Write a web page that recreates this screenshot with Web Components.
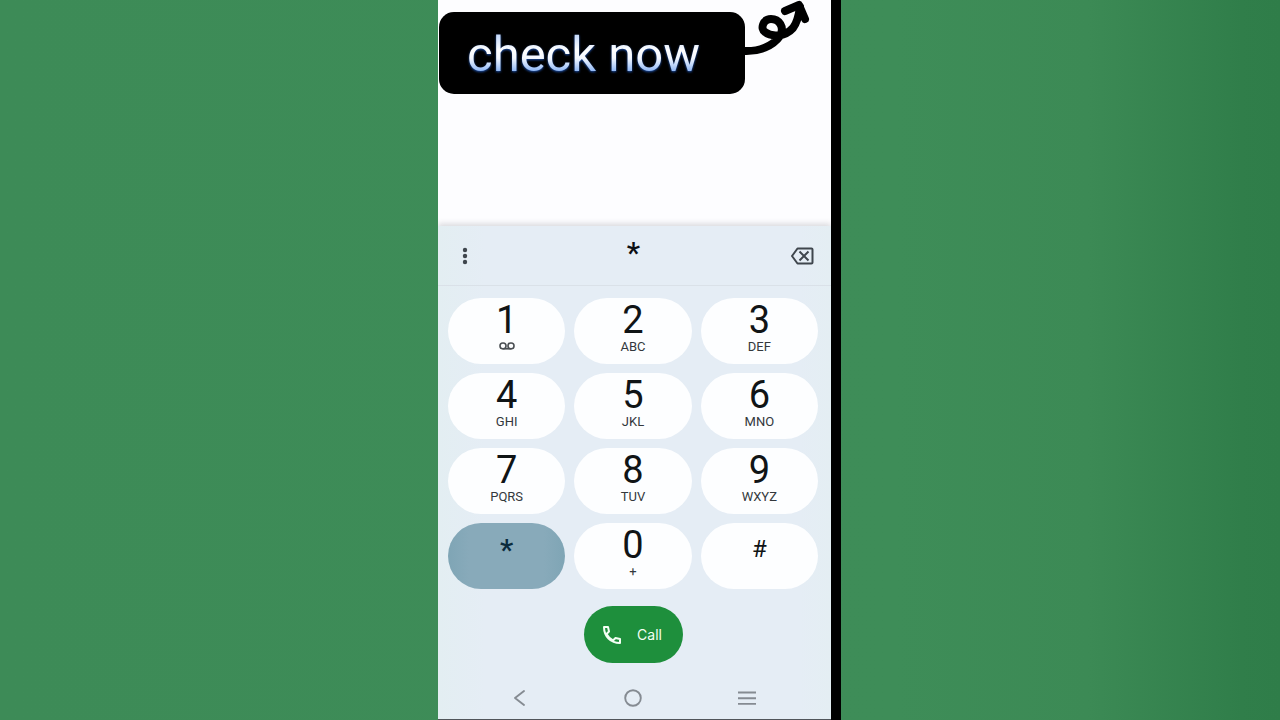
<!DOCTYPE html>
<html lang="en">
<head>
  <meta charset="UTF-8">
  <meta name="viewport" content="width=device-width, initial-scale=1.0">
  <title>Phone dialer</title>
  <style>
    body {
      margin: 0;
      font-family: Roboto, "Liberation Sans", sans-serif;
      color: #101416;
    }
  </style>
</head>
<body>
  <phone-stage>
    <promo-banner slot="top">check now</promo-banner>
    <dial-display value="*"></dial-display>
    <dial-pad></dial-pad>
    <call-button>Call</call-button>
    <system-nav></system-nav>
  </phone-stage>

  <script>
    // Green backdrop with the phone screen in the middle
    class PhoneStage extends HTMLElement {
      constructor() {
        super();
        this.attachShadow({ mode: 'open' });
      }

      connectedCallback() {
        this.shadowRoot.innerHTML = `
          <style>
            :host {
              display: grid;
              grid-template-columns: minmax(0, 438fr) minmax(0, 403fr) minmax(0, 439fr);
              min-height: 100vh;
              background: linear-gradient(to right, #3d8b57 0%, #3e8d58 70%, #3c8a55 85%, #307e4a 97%, #2f7d49 100%);
            }

            main {
              grid-column: 2;
              display: flex;
              flex-direction: column;
              border-right: 10px solid #000;
              background: #fdfdff;
            }

            .log {
              flex: 1;
            }

            .panel {
              display: flex;
              flex-direction: column;
              background: linear-gradient(to right, #e3eef2, #e5edf5 12%, #e5edf5 92%, #e4eef3);
              box-shadow: 0 -2px 6px rgba(60, 60, 70, 0.2);
              clip-path: inset(-12px 0 0 0);
              border-bottom: 1px solid #50555a;
            }
          </style>
          <main>
            <div class="log"><slot name="top"></slot></div>
            <section class="panel"><slot></slot></section>
          </main>
        `;
      }
    }

    // Black label with a curly arrow coming out of its right side
    class PromoBanner extends HTMLElement {
      constructor() {
        super();
        this.attachShadow({ mode: 'open' });
      }

      connectedCallback() {
        this.shadowRoot.innerHTML = `
          <style>
            :host {
              display: flex;
              align-items: flex-start;
              padding-left: 1px;
            }

            .label {
              margin-top: 12px;
              padding: 4px 45px 0 28px;
              border-radius: 15px;
              background: #000;
              font: 400 49px/78px Roboto, sans-serif;
              white-space: nowrap;
            }

            .label span {
              display: block;
              background: linear-gradient(#c9dcfb 26%, #fff 44%, #f4f8ff 54%, #8fb7f5 71%, #6f9ff0 80%);
              background-clip: text;
              -webkit-background-clip: text;
              color: transparent;
              filter: drop-shadow(0 1px 1px #1d4fa8);
            }

            svg {
              flex: none;
              margin-left: -2px;
            }
          </style>
          <div class="label"><span><slot></slot></span></div>
          <svg width="70" height="60" viewBox="0 0 70 60" fill="none" stroke="#000" stroke-width="8" stroke-linecap="round" stroke-linejoin="round" aria-hidden="true">
            <path d="M0 51C16 52 30 46 37 36C42 27 36 19 28 19C20 19 17 29 22 32C28 37 42 37 50 28C54 23 56 14 57 7"/>
            <path d="M42 11L56 5L62 19"/>
          </svg>
        `;
      }
    }

    // Row with the typed number between the menu and backspace buttons
    class DialDisplay extends HTMLElement {
      constructor() {
        super();
        this.attachShadow({ mode: 'open' });
      }

      connectedCallback() {
        this.shadowRoot.innerHTML = `
          <style>
            :host {
              display: flex;
              align-items: center;
              height: 59px;
              padding: 0 17px 0 15px;
              border-bottom: 1px solid #dae1e8;
            }

            button {
              display: flex;
              flex: none;
              padding: 0;
              border: 0;
              background: none;
              color: #3f464d;
              cursor: pointer;
            }

            input {
              flex: 1;
              min-width: 0;
              height: 44px;
              padding: 0 0 6px;
              box-sizing: border-box;
              border: 0;
              outline: 0;
              background: none;
              color: #0c0f14;
              font: 500 30px/36px Roboto, sans-serif;
              text-align: center;
            }
          </style>
          <button type="button" aria-label="More options">
            <svg width="24" height="24" viewBox="0 0 24 24" fill="currentColor">
              <circle cx="12" cy="6" r="2.2"/>
              <circle cx="12" cy="12" r="2.2"/>
              <circle cx="12" cy="18" r="2.2"/>
            </svg>
          </button>
          <input type="tel" aria-label="Phone number">
          <button type="button" aria-label="Backspace" id="erase">
            <svg width="24" height="24" viewBox="0 0 24 24" fill="none" stroke="currentColor" stroke-width="2" stroke-linejoin="round">
              <path d="M7.5 4.5H21.5Q22.5 4.5 22.5 5.5V18.5Q22.5 19.5 21.5 19.5H7.5L2 12Z"/>
              <path d="M9.5 7.5L18.5 16.5M18.5 7.5L9.5 16.5"/>
            </svg>
          </button>
        `;
        this.input = this.shadowRoot.querySelector('input');
        this.input.value = this.getAttribute('value') || '';
        this.shadowRoot.getElementById('erase').addEventListener('click', () => {
          this.input.value = this.input.value.slice(0, -1);
        });
      }

      append(text) {
        this.input.value += text;
      }
    }

    // One pill-shaped key
    class DialKey extends HTMLElement {
      constructor() {
        super();
        this.attachShadow({ mode: 'open' });
      }

      connectedCallback() {
        const digit = this.getAttribute('digit');
        const kind = { '*': 'star', '#': 'hash' }[digit] || 'number';

        this.shadowRoot.innerHTML = `
          <style>
            :host {
              display: block;
            }

            button {
              display: flex;
              flex-direction: column;
              align-items: center;
              width: 100%;
              height: 66px;
              padding: 0;
              border: 0;
              border-radius: 33px;
              background: #fdfeff;
              color: inherit;
              font-family: inherit;
              cursor: pointer;
            }

            :host([pressed]) button {
              background: linear-gradient(to right, #7fa5b5, #88aaba 18%, #88aaba 82%, #7fa5b5);
              color: #0b2c3d;
            }

            .number {
              font-size: 38px;
              line-height: 44px;
            }

            .star {
              font-size: 30px;
              font-weight: 500;
              line-height: 54px;
            }

            .hash {
              font-size: 24px;
              line-height: 52px;
            }

            .letters {
              font-size: 13px;
              line-height: 10px;
              color: #33383c;
            }
          </style>
          <button type="button">
            <span class="${kind}">${digit}</span>
            <span class="letters"><slot></slot></span>
          </button>
        `;
        this.shadowRoot.querySelector('button').addEventListener('click', () => {
          this.dispatchEvent(new CustomEvent('dial', { detail: digit, bubbles: true, composed: true }));
        });
      }
    }

    class DialPad extends HTMLElement {
      constructor() {
        super();
        this.attachShadow({ mode: 'open' });
      }

      connectedCallback() {
        this.shadowRoot.innerHTML = `
          <style>
            :host {
              display: grid;
              grid-template-columns: repeat(3, 1fr);
              gap: 9px;
              padding: 12px 13px 17px 10px;
            }

            svg {
              display: block;
            }
          </style>
          <dial-key digit="1">
            <svg width="16" height="8" viewBox="0 0 16 8" fill="none" stroke="#4a4f53" stroke-width="1.6" role="img" aria-label="Voicemail">
              <rect x="1" y="1" width="6" height="5.8" rx="2.8"/>
              <rect x="9" y="1" width="6" height="5.8" rx="2.8"/>
              <path d="M3.5 6.8H12.5"/>
            </svg>
          </dial-key>
          <dial-key digit="2">ABC</dial-key>
          <dial-key digit="3">DEF</dial-key>
          <dial-key digit="4">GHI</dial-key>
          <dial-key digit="5">JKL</dial-key>
          <dial-key digit="6">MNO</dial-key>
          <dial-key digit="7">PQRS</dial-key>
          <dial-key digit="8">TUV</dial-key>
          <dial-key digit="9">WXYZ</dial-key>
          <dial-key digit="*" pressed></dial-key>
          <dial-key digit="0">+</dial-key>
          <dial-key digit="#"></dial-key>
        `;
      }
    }

    class CallButton extends HTMLElement {
      constructor() {
        super();
        this.attachShadow({ mode: 'open' });
      }

      connectedCallback() {
        this.shadowRoot.innerHTML = `
          <style>
            :host {
              display: flex;
              justify-content: center;
              padding-right: 2px;
            }

            button {
              display: flex;
              align-items: center;
              gap: 13px;
              height: 57px;
              padding: 0 21px 0 16px;
              border: 0;
              border-radius: 29px;
              background: #1e8f3c;
              color: #f4fff4;
              font: 400 14px/20px Inter, sans-serif;
              cursor: pointer;
            }
          </style>
          <button type="button">
            <svg width="24" height="24" viewBox="0 0 24 24" fill="none" stroke="currentColor" stroke-width="2" stroke-linejoin="round" aria-hidden="true">
              <path d="M4 4H8L9 8.5L6.5 11Q9 15.5 13 17.5L15.5 15L20 16V20Q13 20 8.5 15.5Q4 11 4 4Z"/>
            </svg>
            <slot></slot>
          </button>
        `;
      }
    }

    // Android navigation bar
    class SystemNav extends HTMLElement {
      constructor() {
        super();
        this.attachShadow({ mode: 'open' });
      }

      connectedCallback() {
        this.shadowRoot.innerHTML = `
          <style>
            :host {
              display: block;
            }

            nav {
              display: flex;
              padding: 25px 27px 11px 24px;
            }

            button {
              flex: 1;
              display: flex;
              justify-content: center;
              padding: 0;
              border: 0;
              background: none;
              color: #858b92;
              cursor: pointer;
            }
          </style>
          <nav aria-label="System">
            <button type="button" aria-label="Back">
              <svg width="20" height="20" viewBox="0 0 20 20" fill="none" stroke="currentColor" stroke-width="1.9" stroke-linecap="round" stroke-linejoin="round"><path d="M15 3L6 10L15 17"/></svg>
            </button>
            <button type="button" aria-label="Home">
              <svg width="20" height="20" viewBox="0 0 20 20" fill="none" stroke="currentColor" stroke-width="1.9"><circle cx="10" cy="10" r="7.8"/></svg>
            </button>
            <button type="button" aria-label="Recent apps">
              <svg width="20" height="20" viewBox="0 0 20 20" fill="none" stroke="currentColor" stroke-width="1.9"><path d="M1 4.5H19M1 10.2H19M1 15.9H19"/></svg>
            </button>
          </nav>
        `;
      }
    }

    customElements.define('phone-stage', PhoneStage);
    customElements.define('promo-banner', PromoBanner);
    customElements.define('dial-display', DialDisplay);
    customElements.define('dial-key', DialKey);
    customElements.define('dial-pad', DialPad);
    customElements.define('call-button', CallButton);
    customElements.define('system-nav', SystemNav);

    // Keys write into the number field
    document.addEventListener('dial', (event) => {
      document.querySelector('dial-display').append(event.detail);
    });
  </script>
</body>
</html>
